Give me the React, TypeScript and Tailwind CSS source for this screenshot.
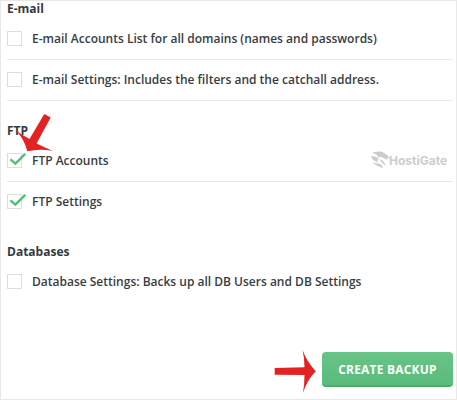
import React from "react";

function Option({ label, spacing = "", checked = false, line = false }: { label: string; spacing?: string; checked?: boolean; line?: boolean }) {
  return (
    <label className={`flex h-[41px] items-center border-b pb-[2px] ${line ? "border-[#e8e8e8]" : "border-transparent"}`}>
      <span className="relative mr-[10px] block h-[15px] w-[15px] shrink-0 border border-[#dddddd] bg-white">
        {checked && (
          <svg className="absolute -left-px -top-px" width="20" height="15" viewBox="0 0 20 15" fill="none">
            <path d="M3.4 6.3 L8.4 10.7 L18.2 0.8" stroke="#57bc7b" strokeWidth="2.4" />
          </svg>
        )}
      </span>
      <span className={`whitespace-nowrap pt-[2px] text-[12px] leading-[18px] font-semibold text-[#383d43] ${spacing}`}>{label}</span>
    </label>
  );
}

function Heading({ children }: { children: React.ReactNode }) {
  return <h2 className="h-[18px] text-[12px] leading-[16px] font-bold text-[#35393f]">{children}</h2>;
}

function Logo() {
  return (
    <div className="absolute left-[371px] top-[150px] flex h-[20px] items-center text-[#cccccc]">
      <svg width="18" height="20" viewBox="0 0 18 20" fill="currentColor">
        <path d="M1 2.500 C5 2 9 0 13 3 C16 4.500 18 6 18 9 L15.500 8 L16 10 L12.500 8 C10.500 6.500 8.500 6.500 7 7.500 C7 5 5 4.500 1 2.500Z" />
        <path d="M0 6.500 C3 6 6 7 8 9 C6 9.500 6 11 8 12.500 C4 12 1.500 9.500 0 6.500Z" />
        <path d="M2 12 C5 14 8 13 10 14.500 C12 16 11 18 12 19 C10.500 17.500 9 16.500 7 16 C5 15.500 3 14 2 12Z" />
        <path d="M9 9.500 C12 10 13 12 15 16 C13 14 10 13 9 9.500Z" />
      </svg>
      <span className="pt-[2px] font-['Inter',sans-serif] text-[12px] leading-none font-bold">HostiGate</span>
    </div>
  );
}

export default function App() {
  return (
    <main className="relative h-[400px] w-[457px] bg-white font-['Open_Sans',sans-serif]">
      <div className="flex h-[400px] w-[457px] flex-col border border-[#e8e8e8] pl-[6px] pr-[3px]">
        <section className="h-[122px]">
          <Heading>E-mail</Heading>
          <Option label="E-mail Accounts List for all domains (names and passwords)" line />
          <Option label="E-mail Settings: Includes the filters and the catchall address." line />
        </section>
        <section className="h-[121px]">
          <Heading>FTP</Heading>
          <Option label="FTP Accounts" checked line />
          <Option label="FTP Settings" checked />
        </section>
        <section className="h-[108px]">
          <Heading>Databases</Heading>
          <Option label="Database Settings: Backs up all DB Users and DB Settings" />
        </section>
        <button className="h-[35px] w-[131px] shrink-0 self-end rounded-[4px] border-b-2 border-[#47ae69] bg-linear-to-b from-[#68c487] to-[#5abb7b] pt-[2px] text-[12px] font-bold tracking-[0.2px] text-white">
          CREATE BACKUP
        </button>
      </div>
      <Logo />
      <svg className="pointer-events-none absolute left-0 top-0" width="457" height="400" fill="#e32222">
        <path d="M44.300 114 L50.700 117.500 L36.500 143.500 Q44 147 52.300 150.800 Q40 148.500 27.300 151.300 Q24 138 15.300 130 Q22 135 29.500 139 Z" />
        <path d="M274.700 368 L304.500 367.200 Q304.500 358 302.500 350 Q307 362 315.700 371.300 Q307 380 303 393 Q304.500 384 304.500 375 L274.700 374.700 Z" />
      </svg>
    </main>
  );
}
